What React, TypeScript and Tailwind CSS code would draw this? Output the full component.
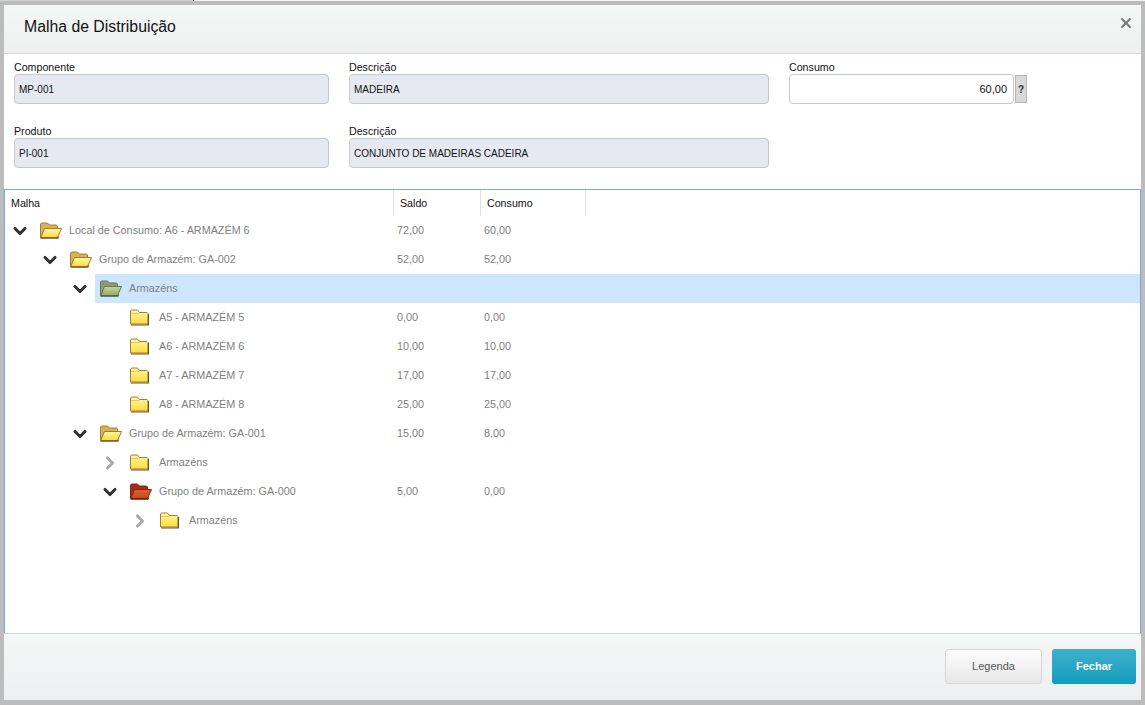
import { ChevronDown, ChevronRight, X } from 'lucide-react'

type FolderTone = 'yellow' | 'green' | 'red'

type Node = {
  level: number
  label: string
  open?: boolean
  expander?: 'down' | 'right'
  tone?: FolderTone
  saldo?: string
  consumo?: string
  selected?: boolean
}

const NODES: Node[] = [
  { level: 0, label: 'Local de Consumo: A6 - ARMAZÉM 6', open: true, expander: 'down', saldo: '72,00', consumo: '60,00' },
  { level: 1, label: 'Grupo de Armazém: GA-002', open: true, expander: 'down', saldo: '52,00', consumo: '52,00' },
  { level: 2, label: 'Armazéns', open: true, expander: 'down', tone: 'green', selected: true },
  { level: 3, label: 'A5 - ARMAZÉM 5', saldo: '0,00', consumo: '0,00' },
  { level: 3, label: 'A6 - ARMAZÉM 6', saldo: '10,00', consumo: '10,00' },
  { level: 3, label: 'A7 - ARMAZÉM 7', saldo: '17,00', consumo: '17,00' },
  { level: 3, label: 'A8 - ARMAZÉM 8', saldo: '25,00', consumo: '25,00' },
  { level: 2, label: 'Grupo de Armazém: GA-001', open: true, expander: 'down', saldo: '15,00', consumo: '8,00' },
  { level: 3, label: 'Armazéns', expander: 'right' },
  { level: 3, label: 'Grupo de Armazém: GA-000', open: true, expander: 'down', tone: 'red', saldo: '5,00', consumo: '0,00' },
  { level: 4, label: 'Armazéns', expander: 'right' },
]

const TONES = {
  yellow: { back: '#d8b055', line: '#a67c30', top: '#fff8a8', bottom: '#fcdc3c', edge: '#6e5420' },
  green: { back: '#8f9c70', line: '#6b7554', top: '#c4d69a', bottom: '#93ab68', edge: '#4e5640' },
  red: { back: '#a52c16', line: '#8a2210', top: '#dc642e', bottom: '#c8461a', edge: '#5e170b' },
}

function OpenFolder({ tone, id }: { tone: FolderTone; id: string }) {
  const c = TONES[tone]
  return (
    <svg width="22" height="17" viewBox="0 0 22 17" className="block">
      <defs>
        <linearGradient id={id} x1="0" y1="0" x2="0" y2="1">
          <stop offset="0" stopColor={c.top} />
          <stop offset="1" stopColor={c.bottom} />
        </linearGradient>
      </defs>
      <path d="M0.5 15.5V2L1.5 1H7.5L9.5 3H16.5L17.5 4V6.5H5L0.5 15.5Z" fill={c.back} stroke={c.line} />
      <path d="M4.5 6.5H21.5L17.5 15.5H0.8L4.5 6.5Z" fill={`url(#${id})`} stroke={c.line} />
      <path d="M0.5 16.2H17.8L18.6 14.6" fill="none" stroke={c.edge} strokeWidth="1.3" />
    </svg>
  )
}

function ClosedFolder({ id }: { id: string }) {
  const c = TONES.yellow
  return (
    <svg width="19" height="17" viewBox="0 0 19 17" className="block">
      <defs>
        <linearGradient id={id} x1="0" y1="0" x2="0" y2="1">
          <stop offset="0" stopColor={c.top} />
          <stop offset="1" stopColor={c.bottom} />
        </linearGradient>
      </defs>
      <path d="M0.5 15V2L1.5 1H7.5L9.5 3.5H17L18 4.5V15H0.5Z" fill={`url(#${id})`} stroke={c.line} />
      <path d="M1 4.5H9.5" stroke="#e6c860" />
      <path d="M1 16H18.5V5" fill="none" stroke={c.edge} strokeWidth="1.2" />
    </svg>
  )
}

function Field({ label, value, className }: { label: string; value: string; className: string }) {
  return (
    <label className={`block ${className}`}>
      <span className="block h-[14px] text-[10.67px] leading-[14px] text-[#111]">{label}</span>
      <input
        readOnly
        value={value}
        className="block h-[30px] w-full rounded-[4px] border border-[#c8c9cc] bg-[#e6e9f1] px-[4px] text-[10px] text-[#111] outline-none"
      />
    </label>
  )
}

function TreeRow({ node, index }: { node: Node; index: number }) {
  const start = node.level * 30
  return (
    <div className="flex h-[29px] items-center" style={{ paddingLeft: start }}>
      <div className="flex h-full w-[30px] shrink-0 items-center justify-center">
        {node.expander === 'down' && <ChevronDown size={20} strokeWidth={3.8} className="text-[#333]" />}
        {node.expander === 'right' && <ChevronRight size={20} strokeWidth={3.8} className="text-[#aaa]" />}
      </div>
      <div className={`flex h-full flex-1 items-center pl-[5px] text-[10.8px] text-[#7f7f7f] ${node.selected ? 'bg-[#cce6fe]' : ''}`}>
        <div className="flex shrink-0 items-center" style={{ width: 357 - start }}>
          <div className="w-[29px] shrink-0">
            {node.open ? (
              <OpenFolder tone={node.tone ?? 'yellow'} id={`folder-${index}`} />
            ) : (
              <ClosedFolder id={`folder-${index}`} />
            )}
          </div>
          <span className="whitespace-nowrap">{node.label}</span>
        </div>
        <span className="w-[87px]">{node.saldo}</span>
        <span>{node.consumo}</span>
      </div>
    </div>
  )
}

export default function App() {
  return (
    <div className="flex h-[705px] w-[1145px] flex-col overflow-hidden bg-[#bcbcbc] font-['Liberation_Sans',Arial,sans-serif] text-[11px]">
      {/* strip of the page behind the modal */}
      <div className="flex h-px shrink-0">
        <div className="w-[193px] bg-[#d4d4d4]" />
        <div className="w-px bg-[#555]" />
        <div className="flex-1 bg-[#f4f4f4]" />
      </div>
      <div className="min-h-0 flex-1 pb-[5px] pl-[4px] pr-[4px] pt-[4px]">
        <div className="flex h-full flex-col bg-white">
          <header className="flex h-[49px] shrink-0 items-center justify-between border-b border-[#d8d8d8] bg-gradient-to-b from-[#f5f6f6] to-[#eeefef] pb-[4px] pl-[20px] pr-[7px]">
            <h1 className="text-[15.8px] leading-[20px] text-[#111]">Malha de Distribuição</h1>
            <X size={16} strokeWidth={3} className="mb-[8px] text-[#777]" />
          </header>

          <div className="flex h-[135px] shrink-0 flex-col gap-[20px] pl-[10px] pt-[6px]">
            <div className="flex gap-[20px]">
              <Field label="Componente" value="MP-001" className="w-[315px]" />
              <Field label="Descrição" value="MADEIRA" className="w-[420px]" />
              <div className="flex items-end">
                <label className="block w-[225px]">
                  <span className="block h-[14px] text-[10.67px] leading-[14px] text-[#111]">Consumo</span>
                  <input
                    readOnly
                    value="60,00"
                    className="block h-[30px] w-full rounded-[4px] border border-[#c8c9cc] bg-white px-[6px] text-right text-[11px] text-[#111] outline-none"
                  />
                </label>
                <button className="mb-px ml-px h-[28px] w-[12px] border border-[#b5b5b5] bg-[#d9d9d9] text-[10px] font-bold text-[#333]">
                  ?
                </button>
              </div>
            </div>
            <div className="flex gap-[20px]">
              <Field label="Produto" value="PI-001" className="w-[315px]" />
              <Field label="Descrição" value="CONJUNTO DE MADEIRAS CADEIRA" className="w-[420px]" />
            </div>
          </div>

          <section className="min-h-0 flex-1 border-x border-t border-x-[#7aa5ee] border-t-[#7aa5ee]">
            <div className="flex h-[26px] text-[10.67px] text-[#111]">
              <div className="flex w-[389px] items-center border-r border-[#e2e2e2] pl-[6px]">Malha</div>
              <div className="flex w-[87px] items-center border-r border-[#e2e2e2] pl-[6px]">Saldo</div>
              <div className="flex w-[105px] items-center border-r border-[#e2e2e2] pl-[6px]">Consumo</div>
            </div>
            {NODES.map((node, i) => (
              <TreeRow key={i} node={node} index={i} />
            ))}
          </section>

          <footer className="flex h-[67px] shrink-0 items-start justify-end gap-[10px] border-t border-[#d4d4d4] bg-gradient-to-b from-[#f5f6f6] to-[#eeeff0] pr-[5px] pt-[15px]">
            <button className="h-[35px] w-[97px] rounded-[3px] border border-[#d6d6d6] bg-gradient-to-b from-[#fcfcfc] to-[#e8e8e8] text-[11px] text-[#555]">
              Legenda
            </button>
            <button className="h-[35px] w-[84px] rounded-[3px] bg-gradient-to-b from-[#3db0cd] to-[#109dbe] text-[11px] font-bold text-white">
              Fechar
            </button>
          </footer>
        </div>
      </div>
    </div>
  )
}
